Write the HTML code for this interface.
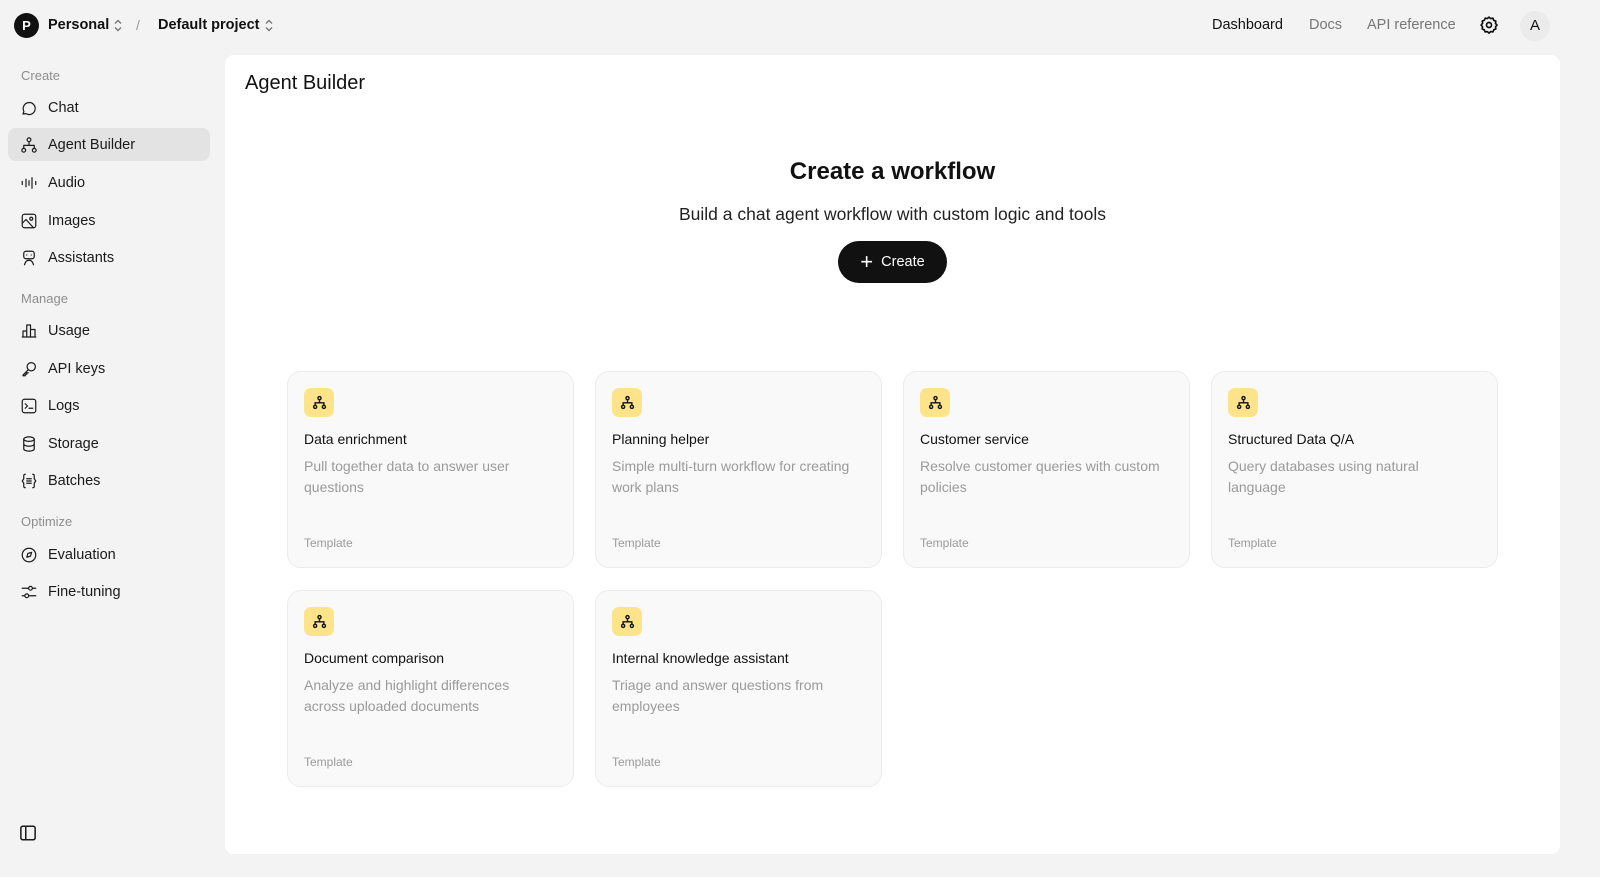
<!DOCTYPE html>
<html><head><meta charset="utf-8"><style>
*{box-sizing:border-box;margin:0;padding:0}
body{width:1600px;height:877px;background:#f3f3f3;font-family:"Liberation Sans",sans-serif;color:#0d0d0d;position:relative;overflow:hidden}
.top{position:absolute;top:0;left:0;right:0;height:52px}
.abs{position:absolute}
.nav{position:absolute;left:8px;width:202px}
.sec{position:absolute;left:21px;font-size:13px;color:#8e8e8e}
.item{position:absolute;left:8px;width:202px;height:33px;border-radius:8px;display:flex;align-items:center;padding-left:12px;font-size:14.5px;color:#1a1a1a}
.item svg{width:18px;height:18px;margin-right:10px;fill:none;stroke:#1a1a1a;stroke-width:1.6;stroke-linecap:round;stroke-linejoin:round}
.item.act{background:#e3e3e3}
.main{position:absolute;left:225px;top:55px;width:1335px;height:799px;background:#fff;border-radius:9px}
.card{position:absolute;width:287px;height:197px;border:1px solid #ececec;background:#f9f9f9;border-radius:14px}
.ic{position:absolute;left:16px;top:16px;width:30px;height:29px;border-radius:7px;background:#fde48a;display:flex;align-items:center;justify-content:center}
.ct{position:absolute;left:16px;top:59px;font-size:14px;color:#111}
.cd{position:absolute;left:16px;top:84px;width:250px;font-size:14px;line-height:21px;color:#9a9a9a}
.tp{position:absolute;left:16px;top:164px;font-size:12px;color:#9a9a9a}
</style></head><body>
<div class="abs" style="left:14px;top:13px;width:25px;height:25px;border-radius:50%;background:#111;color:#fff;font-size:13px;font-weight:bold;text-align:center;line-height:25px">P</div>
<div class="abs" style="left:48px;top:17px;font-size:14.5px;font-weight:bold;color:#111">Personal</div>
<svg class="abs" style="left:112px;top:18px" width="12" height="15" viewBox="0 0 12 15" fill="none" stroke="#777" stroke-width="1.4"><path d="M3 5.5l3-3 3 3M3 9.5l3 3 3-3"/></svg>
<div class="abs" style="left:136px;top:17px;font-size:14px;color:#999">/</div>
<div class="abs" style="left:158px;top:17px;font-size:14.5px;font-weight:bold;color:#111">Default project</div>
<svg class="abs" style="left:263px;top:18px" width="12" height="15" viewBox="0 0 12 15" fill="none" stroke="#777" stroke-width="1.4"><path d="M3 5.5l3-3 3 3M3 9.5l3 3 3-3"/></svg>
<div class="abs" style="left:1212px;top:17px;font-size:14.5px;color:#111">Dashboard</div>
<div class="abs" style="left:1309px;top:17px;font-size:14.5px;color:#777">Docs</div>
<div class="abs" style="left:1367px;top:17px;font-size:14.5px;color:#777">API reference</div>
<svg class="abs" style="left:1479px;top:15px" width="20" height="20" viewBox="0 0 24 24" fill="none" stroke="#111" stroke-width="2" stroke-linejoin="round"><path d="M12 2.5l2 1.8 2.7-.4 1 2.5 2.5 1-.4 2.7 1.8 2-1.8 2 .4 2.7-2.5 1-1 2.5-2.7-.4-2 1.8-2-1.8-2.7.4-1-2.5-2.5-1 .4-2.7L2.5 12l1.8-2-.4-2.7 2.5-1 1-2.5 2.7.4z"/><circle cx="12" cy="12" r="3"/></svg>
<div class="abs" style="left:1520px;top:11px;width:30px;height:30px;border-radius:50%;background:#ebebeb;font-size:15px;text-align:center;line-height:30px;color:#111">A</div>

<div class="sec" style="top:68px">Create</div>
<div class="item" style="top:91px"><svg viewBox="0 0 24 24"><path d="M4 20l1.2-3.5A8 8 0 1 1 8 19.5z"/></svg>Chat</div>
<div class="item act" style="top:128px"><svg viewBox="0 0 24 24"><circle cx="12" cy="5" r="2.5"/><circle cx="5" cy="19" r="2.5"/><circle cx="19" cy="19" r="2.5"/><path d="M12 7.5v5M5 16.5v-4h14v4"/></svg>Agent Builder</div>
<div class="item" style="top:166px"><svg viewBox="0 0 24 24"><path d="M3 10v4M8 7v10M12 9v6M16 5v14M21 10v4"/></svg>Audio</div>
<div class="item" style="top:204px"><svg viewBox="0 0 24 24"><rect x="3" y="3" width="18" height="18" rx="3"/><circle cx="15" cy="9" r="2"/><path d="M3 15l5-5 10 11"/></svg>Images</div>
<div class="item" style="top:241px"><svg viewBox="0 0 24 24"><rect x="5" y="3" width="14" height="10" rx="3"/><path d="M9 8h.01M15 8h.01M6 21c1-4 3-6 6-6s5 2 6 6"/></svg>Assistants</div>
<div class="sec" style="top:291px">Manage</div>
<div class="item" style="top:314px"><svg viewBox="0 0 24 24"><path d="M3 20h18M4 20v-8h5v8M9 20V4h5v16M14 20v-10h6v10"/></svg>Usage</div>
<div class="item" style="top:352px"><svg viewBox="0 0 24 24"><circle cx="15" cy="9" r="5.5"/><path d="M11 13l-7 7v1h3v-2h2v-2h2"/></svg>API keys</div>
<div class="item" style="top:389px"><svg viewBox="0 0 24 24"><rect x="3" y="3" width="18" height="18" rx="3"/><path d="M7 9l3 3-3 3M12 15h5"/></svg>Logs</div>
<div class="item" style="top:427px"><svg viewBox="0 0 24 24"><ellipse cx="12" cy="5.5" rx="7" ry="3"/><path d="M5 5.5v13c0 1.7 3 3 7 3s7-1.3 7-3v-13M5 12c0 1.7 3 3 7 3s7-1.3 7-3"/></svg>Storage</div>
<div class="item" style="top:464px"><svg viewBox="0 0 24 24"><path d="M7 3c-2 0-2 1-2 3v3l-2 3 2 3v3c0 2 0 3 2 3M17 3c2 0 2 1 2 3v3l2 3-2 3v3c0 2 0 3-2 3M9 9h6M9 12h6M9 15h6"/></svg>Batches</div>
<div class="sec" style="top:514px">Optimize</div>
<div class="item" style="top:538px"><svg viewBox="0 0 24 24"><circle cx="12" cy="12" r="9"/><path d="M9 15l1.5-5 5-1.5L14 13.5z"/></svg>Evaluation</div>
<div class="item" style="top:575px"><svg viewBox="0 0 24 24"><path d="M3 7h18M3 17h18"/><circle cx="14" cy="7" r="2.5" fill="#f3f3f3"/><circle cx="9" cy="17" r="2.5" fill="#f3f3f3"/></svg>Fine-tuning</div>
<svg class="abs" style="left:19px;top:824px" width="18" height="18" viewBox="0 0 24 24" fill="none" stroke="#1a1a1a" stroke-width="2"><rect x="2.5" y="3" width="19" height="18" rx="2.5"/><path d="M9 3v18"/></svg>

<div class="main">
<div class="abs" style="left:20px;top:17px;font-size:20px;color:#111">Agent Builder</div>
<div class="abs" style="left:0;width:1335px;top:103px;text-align:center;font-size:24px;font-weight:bold;color:#111">Create a workflow</div>
<div class="abs" style="left:0;width:1335px;top:149px;text-align:center;font-size:17.5px;color:#222">Build a chat agent workflow with custom logic and tools</div>
<div class="abs" style="left:613px;top:186px;width:109px;height:42px;border-radius:21px;background:#111;color:#fff;font-size:14.5px;display:flex;align-items:center;justify-content:center"><span style="font-size:22px;margin-right:8px;line-height:20px;font-weight:300">+</span>Create</div>

<div class="card" style="left:62px;top:316px"><div class="ic"><svg width="15" height="15" viewBox="0 0 24 24" fill="none" stroke="#111" stroke-width="2.2"><circle cx="12" cy="5" r="2.5"/><circle cx="5" cy="19" r="2.5"/><circle cx="19" cy="19" r="2.5"/><path d="M12 7.5v5M5 16.5v-4h14v4"/></svg></div><div class="ct">Data enrichment</div><div class="cd">Pull together data to answer user questions</div><div class="tp">Template</div></div>
<div class="card" style="left:370px;top:316px"><div class="ic"><svg width="15" height="15" viewBox="0 0 24 24" fill="none" stroke="#111" stroke-width="2.2"><circle cx="12" cy="5" r="2.5"/><circle cx="5" cy="19" r="2.5"/><circle cx="19" cy="19" r="2.5"/><path d="M12 7.5v5M5 16.5v-4h14v4"/></svg></div><div class="ct">Planning helper</div><div class="cd">Simple multi-turn workflow for creating work plans</div><div class="tp">Template</div></div>
<div class="card" style="left:678px;top:316px"><div class="ic"><svg width="15" height="15" viewBox="0 0 24 24" fill="none" stroke="#111" stroke-width="2.2"><circle cx="12" cy="5" r="2.5"/><circle cx="5" cy="19" r="2.5"/><circle cx="19" cy="19" r="2.5"/><path d="M12 7.5v5M5 16.5v-4h14v4"/></svg></div><div class="ct">Customer service</div><div class="cd">Resolve customer queries with custom policies</div><div class="tp">Template</div></div>
<div class="card" style="left:986px;top:316px"><div class="ic"><svg width="15" height="15" viewBox="0 0 24 24" fill="none" stroke="#111" stroke-width="2.2"><circle cx="12" cy="5" r="2.5"/><circle cx="5" cy="19" r="2.5"/><circle cx="19" cy="19" r="2.5"/><path d="M12 7.5v5M5 16.5v-4h14v4"/></svg></div><div class="ct">Structured Data Q/A</div><div class="cd">Query databases using natural language</div><div class="tp">Template</div></div>
<div class="card" style="left:62px;top:535px"><div class="ic"><svg width="15" height="15" viewBox="0 0 24 24" fill="none" stroke="#111" stroke-width="2.2"><circle cx="12" cy="5" r="2.5"/><circle cx="5" cy="19" r="2.5"/><circle cx="19" cy="19" r="2.5"/><path d="M12 7.5v5M5 16.5v-4h14v4"/></svg></div><div class="ct">Document comparison</div><div class="cd">Analyze and highlight differences across uploaded documents</div><div class="tp">Template</div></div>
<div class="card" style="left:370px;top:535px"><div class="ic"><svg width="15" height="15" viewBox="0 0 24 24" fill="none" stroke="#111" stroke-width="2.2"><circle cx="12" cy="5" r="2.5"/><circle cx="5" cy="19" r="2.5"/><circle cx="19" cy="19" r="2.5"/><path d="M12 7.5v5M5 16.5v-4h14v4"/></svg></div><div class="ct">Internal knowledge assistant</div><div class="cd">Triage and answer questions from employees</div><div class="tp">Template</div></div>
</div>
</body></html>
